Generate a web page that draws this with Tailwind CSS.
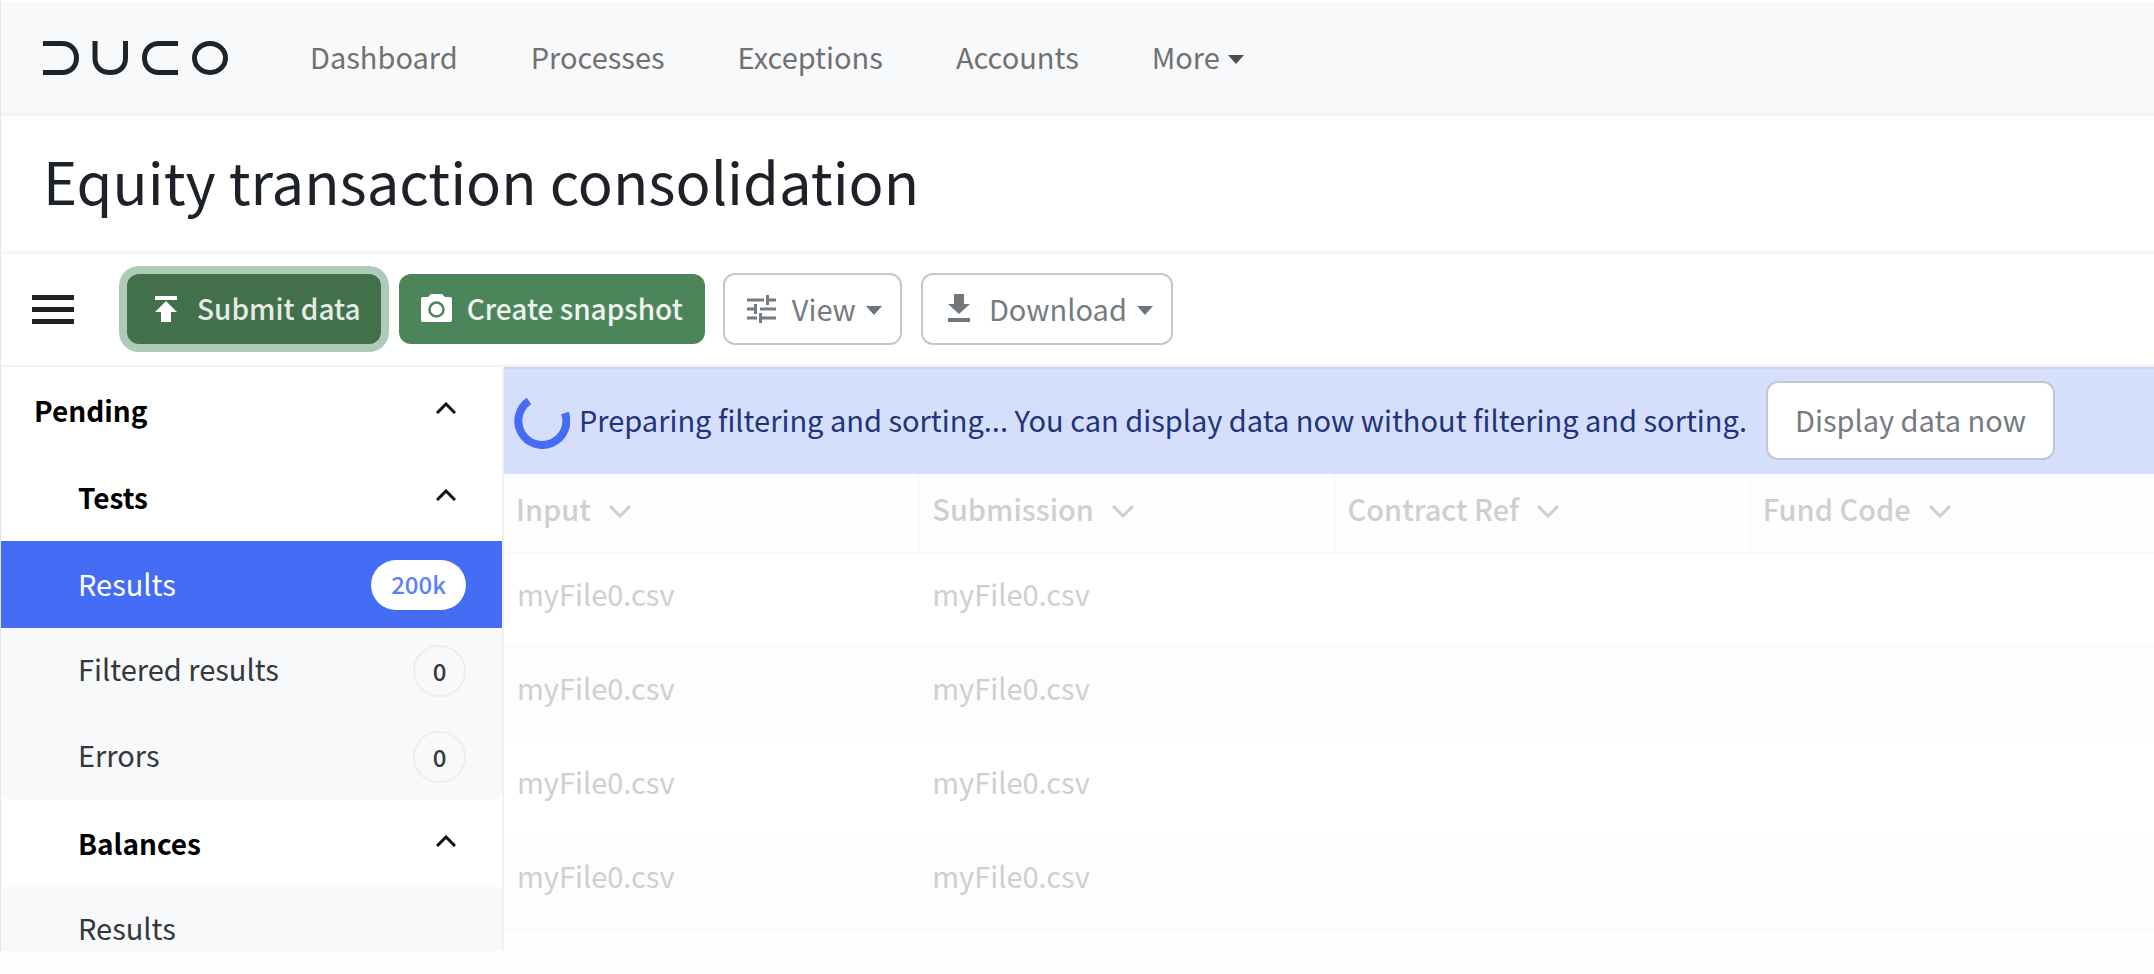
<!DOCTYPE html>
<html lang="en">
<head>
    <meta charset="UTF-8">
    <meta name="viewport" content="width=device-width, initial-scale=1.0">
    <title>Duco - Equity transaction consolidation</title>
    <script src="https://cdn.jsdelivr.net/npm/@tailwindcss/browser@4"></script>
</head>
<body class="min-h-screen bg-[#fefefe] font-['Noto_Sans_CJK_SC','Noto_Sans_CJK_JP',sans-serif] text-[29px] leading-10 text-[#212529]">
    <div class="border-l border-t-2 border-l-[#e4e6e8] border-t-white">
        <!-- Top navigation -->
        <header class="flex h-[114px] items-center border-b-3 border-[#f1f3f6] bg-[#f8f9fb] pl-[42px] text-[#707173]">
            <a href="#" aria-label="Duco" class="mr-[81px]">
                <svg class="h-[34px] w-[186px]" viewBox="0 0 186 34" fill="none" stroke="#1f2429" stroke-width="5">
                    <path d="M0 2.500H19C28 2.500 33.500 9 33.500 17S28 31.500 19 31.500H0"/>
                    <path d="M52 0V17C52 26 58 31.500 67.200 31.500S82.500 26 82.500 17V0"/>
                    <path d="M135 2.500H116C107 2.500 101.500 9 101.500 17S107 31.500 116 31.500H135"/>
                    <ellipse cx="167" cy="17" rx="15.500" ry="14.500"/>
                </svg>
            </a>
            <nav class="flex items-center gap-[73px] pb-1">
                <a href="#">Dashboard</a>
                <a href="#">Processes</a>
                <a href="#">Exceptions</a>
                <a href="#">Accounts</a>
                <button type="button" class="flex items-center gap-2">More
                    <svg class="mt-2 h-[9px] w-4" viewBox="0 0 16 9" fill="#4c4d4f"><path d="M0 0H16L8 9Z"/></svg>
                </button>
            </nav>
        </header>

        <div class="flex h-[138px] items-center border-b-3 border-[#f5f6f8] bg-white pb-2 pl-[42px]">
            <h1 class="text-[58px] leading-[80px] text-[#1d2228]">Equity transaction consolidation</h1>
        </div>

        <!-- Toolbar -->
        <div class="flex h-[113px] items-center border-b-2 border-[#eff1f2] bg-white pb-0.5 pl-[31px]">
            <button type="button" aria-label="Menu" class="mt-0.5 mr-[53px]">
                <svg class="h-[30px] w-[42px]" viewBox="0 0 42 30" fill="#212121"><path d="M0 0H42V5H0ZM0 12H42V17H0ZM0 24H42V29H0Z"/></svg>
            </button>
            <button type="button" class="mr-[18px] flex h-[70px] items-center gap-5 rounded-xl bg-[#42704b] pr-5 pl-7 text-[28px] font-medium text-[#e4ece6] ring-8 ring-[#aecbb9]">
                <svg class="h-[26px] w-[22px]" viewBox="0 0 22 26" fill="#fff"><path d="M0 0H22V4H0ZM11 5L22 16H16V26H6V16H0Z"/></svg>
                <span class="pb-0.5">Submit data</span>
            </button>
            <button type="button" class="mr-[18px] flex h-[70px] items-center gap-[15px] rounded-xl bg-[#4d855a] px-[22px] text-[28px] font-medium text-[#edf4ef]">
                <svg class="mb-0.5 h-7 w-[31px]" viewBox="0 0 31 28"><path fill="#fff" d="M10 0H21L24 3H29Q31 3 31 5V26Q31 28 29 28H2Q0 28 0 26V5Q0 3 2 3H7Z"/><circle cx="15.500" cy="15.500" r="7" fill="none" stroke="#4d855a" stroke-width="2.500"/></svg>
                <span class="pb-0.5">Create snapshot</span>
            </button>
            <button type="button" class="mr-[19px] flex h-[72px] items-center rounded-xl border-2 border-[#c5c8ca] pr-[18px] pl-[22px] text-[#757b80]">
                <svg class="mr-4 h-7 w-[29px]" viewBox="0 0 29 28" fill="none" stroke="#757b80" stroke-width="3"><path d="M0 5H17M20.500 0V10M20.500 5H29M0 14H8M8.500 9V19M13 14H29M0 23H10M13.500 18V28M13.500 23H29"/></svg>
                <span class="pb-0.5">View</span>
                <svg class="mt-1 ml-[10px] h-[9px] w-4" viewBox="0 0 16 9" fill="#6c757d"><path d="M0 0H16L8 9Z"/></svg>
            </button>
            <button type="button" class="flex h-[72px] items-center rounded-xl border-2 border-[#c5c8ca] pr-[18px] pl-[25px] text-[#757b80]">
                <svg class="mr-[19px] mb-0.5 h-7 w-[22px]" viewBox="0 0 22 28" fill="#70777d"><path d="M6 0H16V10H22L11 20L0 10H6ZM0 24H22V28H0Z"/></svg>
                <span class="pb-0.5">Download</span>
                <svg class="mt-1 ml-[10px] h-[9px] w-4" viewBox="0 0 16 9" fill="#6c757d"><path d="M0 0H16L8 9Z"/></svg>
            </button>
        </div>

        <div class="flex h-[584px] overflow-hidden">
            <!-- Sidebar -->
            <aside class="w-[503px] shrink-0 border-r-2 border-[#eff1f4] bg-white text-[#34383c]">
                <button type="button" class="flex h-[87px] w-full items-center justify-between pr-[46px] pb-0.5 pl-[33px] text-[28px] font-bold text-black">Pending
                    <svg class="mb-1 h-3 w-5" viewBox="0 0 20 12" fill="none" stroke="#111" stroke-width="3"><path d="M1 11L10 2L19 11"/></svg>
                </button>
                <button type="button" class="flex h-[87px] w-full items-center justify-between pr-[46px] pb-0.5 pl-[77px] text-[28px] font-bold text-black">Tests
                    <svg class="mb-1 h-3 w-5" viewBox="0 0 20 12" fill="none" stroke="#111" stroke-width="3"><path d="M1 11L10 2L19 11"/></svg>
                </button>
                <ul class="rounded-b-lg bg-[#f8f9fb]">
                    <li><a href="#" class="flex h-[87px] items-center justify-between bg-[#446cf4] pr-9 pl-[77px] text-white"><span class="pb-1">Results</span>
                        <span class="flex h-[50px] items-center rounded-full bg-white px-5 pb-0.5 text-[24px] font-medium text-[#5b83f6]">200k</span></a></li>
                    <li><a href="#" class="flex h-[86px] items-center justify-between pr-9 pl-[77px]"><span class="pb-1.5">Filtered results</span>
                        <span class="flex h-[52px] w-[53px] items-center justify-center rounded-full border-2 border-[#edeef0] text-[24px] font-medium">0</span></a></li>
                    <li><a href="#" class="flex h-[86px] items-center justify-between pr-9 pl-[77px]"><span class="pb-1.5">Errors</span>
                        <span class="flex h-[52px] w-[53px] items-center justify-center rounded-full border-2 border-[#edeef0] text-[24px] font-medium">0</span></a></li>
                </ul>
                <button type="button" class="flex h-[87px] w-full items-center justify-between pr-[46px] pb-0.5 pl-[77px] text-[28px] font-bold text-black">Balances
                    <svg class="mb-1 h-3 w-5" viewBox="0 0 20 12" fill="none" stroke="#111" stroke-width="3"><path d="M1 11L10 2L19 11"/></svg>
                </button>
                <ul class="bg-[#f8f9fb]">
                    <li><a href="#" class="flex h-[86px] items-center pl-[77px]"><span class="pb-1.5">Results</span></a></li>
                </ul>
            </aside>

            <main class="min-w-0 flex-1">
                <div role="status" class="flex h-[107px] items-center border-t-2 border-[#c9d8f8] bg-[#d5dffc] pb-0.5 pl-[10px] text-[#22337a]">
                    <svg class="mr-[9px] h-14 w-14" viewBox="0 0 56 56" fill="none" stroke="#446cf4" stroke-width="8"><path d="M15 8A24 24 0 1 0 51 20"/></svg>
                    <p class="mr-[19px] pb-1 whitespace-nowrap">Preparing filtering and sorting... You can display data now without filtering and sorting.</p>
                    <button type="button" class="h-[79px] rounded-xl border-2 border-[#c2c7d4] bg-white px-[27px] pb-1 text-[#757b80]">Display data now</button>
                </div>
                <table class="w-[1661px] table-fixed text-left text-[#cfcfcf]">
                    <thead>
                        <tr class="h-[79px] border-b-2 border-[#fafafb]">
                            <th class="border-r-2 border-[#fafafb] pb-[10px] pl-3 font-medium"><div class="flex items-center gap-[18px]">Input
                                <svg class="mt-1.5 h-[13px] w-[22px]" viewBox="0 0 22 13" fill="none" stroke="currentColor" stroke-width="3"><path d="M1 1L11 11L21 1"/></svg></div></th>
                            <th class="border-r-2 border-[#fafafb] pb-[10px] pl-3 font-medium"><div class="flex items-center gap-[18px]">Submission
                                <svg class="mt-1.5 h-[13px] w-[22px]" viewBox="0 0 22 13" fill="none" stroke="currentColor" stroke-width="3"><path d="M1 1L11 11L21 1"/></svg></div></th>
                            <th class="border-r-2 border-[#fafafb] pb-[10px] pl-3 font-medium"><div class="flex items-center gap-[18px]">Contract Ref
                                <svg class="mt-1.5 h-[13px] w-[22px]" viewBox="0 0 22 13" fill="none" stroke="currentColor" stroke-width="3"><path d="M1 1L11 11L21 1"/></svg></div></th>
                            <th class="pb-[10px] pl-3 font-medium"><div class="flex items-center gap-[18px]">Fund Code
                                <svg class="mt-1.5 h-[13px] w-[22px]" viewBox="0 0 22 13" fill="none" stroke="currentColor" stroke-width="3"><path d="M1 1L11 11L21 1"/></svg></div></th>
                        </tr>
                    </thead>
                    <tbody>
                        <tr class="h-[94px] border-b-2 border-[#fbfbfc] bg-white"><td class="pb-[14px] pl-[13px]">myFile0.csv</td><td class="pb-[14px] pl-[13px]">myFile0.csv</td><td></td><td></td></tr>
                        <tr class="h-[94px] border-b-2 border-[#fbfbfc] bg-[#fdfdfd]"><td class="pb-[14px] pl-[13px]">myFile0.csv</td><td class="pb-[14px] pl-[13px]">myFile0.csv</td><td></td><td></td></tr>
                        <tr class="h-[94px] border-b-2 border-[#fbfbfc] bg-white"><td class="pb-[14px] pl-[13px]">myFile0.csv</td><td class="pb-[14px] pl-[13px]">myFile0.csv</td><td></td><td></td></tr>
                        <tr class="h-[94px] border-b-2 border-[#fbfbfc] bg-[#fdfdfd]"><td class="pb-[14px] pl-[13px]">myFile0.csv</td><td class="pb-[14px] pl-[13px]">myFile0.csv</td><td></td><td></td></tr>
                    </tbody>
                </table>
            </main>
        </div>
    </div>
</body>
</html>
